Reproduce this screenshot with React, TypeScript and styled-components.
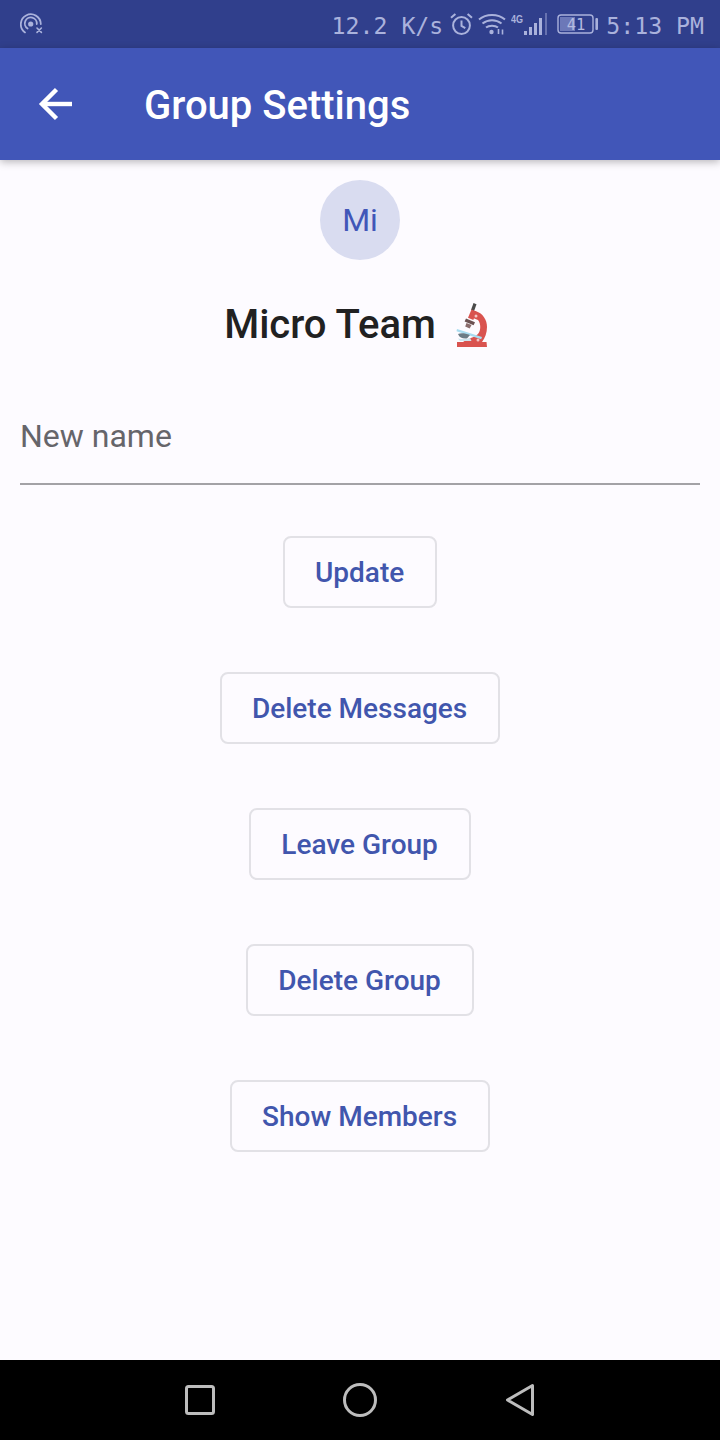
import React from 'react'
import styled, { createGlobalStyle } from 'styled-components'

const GlobalStyle = createGlobalStyle`
    html, body {
        margin: 0;
        padding: 0;
        background: #fdfbff;
    }
    * {
        box-sizing: border-box;
    }
`

const Screen = styled.div`
    width: 720px;
    height: 1440px;
    display: flex;
    flex-direction: column;
    overflow: hidden;
    background: #fdfbff;
    font-family: Roboto, 'Noto Sans', sans-serif;
`

const StatusBar = styled.div`
    height: 48px;
    flex: none;
    display: flex;
    align-items: center;
    justify-content: space-between;
    padding: 0 16px 0 20px;
    background: #303f8c;
    color: #aab2dc;
`

const StatusRight = styled.div`
    display: flex;
    align-items: center;
`

const StatusText = styled.span`
    font-family: 'DejaVu Sans Mono', monospace;
    font-size: 23.2px;
    line-height: 44px;
    padding-top: 4px;
    white-space: pre;
`

const StatusIcon = styled.span<{ $left: number }>`
    display: flex;
    margin-left: ${(p) => p.$left}px;
`

const AppBar = styled.header`
    height: 112px;
    flex: none;
    display: flex;
    align-items: center;
    padding-left: 36px;
    background: #4156b8;
    box-shadow: 0 2px 8px rgba(0, 0, 0, 0.28);
    position: relative;
    z-index: 1;
`

const BarTitle = styled.h1`
    margin: 2px 0 0 68px;
    font-size: 40px;
    font-weight: 500;
    color: #ffffff;
`

const Main = styled.main`
    flex: 1;
    display: flex;
    flex-direction: column;
    align-items: center;
    padding: 20px 20px 0;
`

const Avatar = styled.div`
    width: 80px;
    height: 80px;
    border-radius: 50%;
    display: flex;
    align-items: center;
    justify-content: center;
    background: #d9dcf0;
    color: #4156b8;
    font-size: 32px;
`

const GroupName = styled.div`
    display: flex;
    align-items: center;
    height: 48px;
    margin-top: 40px;
    font-size: 40px;
    font-weight: 500;
    color: #212121;
    white-space: pre;
`

const NameField = styled.label`
    align-self: stretch;
    height: 76px;
    margin-top: 61px;
    display: flex;
    align-items: center;
    padding-bottom: 20px;
    border-bottom: 2px solid #a3a2a6;
    font-size: 32px;
    color: #66656a;
`

const Actions = styled.div`
    display: flex;
    flex-direction: column;
    align-items: center;
    gap: 64px;
    margin-top: 51px;
`

const ActionButton = styled.button`
    height: 72px;
    padding: 0 30.8px 0 30px;
    border: 2px solid #e2e1e6;
    border-radius: 8px;
    background: transparent;
    color: #4156ad;
    font-family: inherit;
    font-size: 28px;
    font-weight: 500;
`

const NavBar = styled.nav`
    height: 80px;
    flex: none;
    display: grid;
    grid-template-columns: repeat(3, 160px);
    justify-content: center;
    justify-items: center;
    align-items: center;
    background: #000000;
`

const BackIcon = () => (
    <svg width="40" height="40" viewBox="0 0 40 40" fill="none" stroke="#fff" strokeWidth="4.4">
        <path d="M36 20H6" />
        <path d="M20.5 5.5L6 20l14.5 14.5" />
    </svg>
)

const BroadcastIcon = () => (
    <svg width="24" height="22" viewBox="0 0 24 22" fill="none" stroke="#aab2dc" strokeWidth="1.8" strokeLinecap="round">
        <path d="M5 19.400A10 10 0 1 1 20.800 11" />
        <path d="M7.600 15.600A6 6 0 1 1 16.800 11" />
        <circle cx="10.700" cy="11" r="2.600" fill="#aab2dc" stroke="none" />
        <path d="M17 15l4.400 4.400M21.400 15L17 19.400" strokeWidth="1.600" />
    </svg>
)

const AlarmIcon = () => (
    <svg width="23" height="22" viewBox="0 0 23 22" fill="none" stroke="#aab2dc" strokeWidth="2">
        <circle cx="11.500" cy="12.500" r="8.400" />
        <path d="M11.500 7.500v5.400l3.800 2.200" />
        <path d="M1 4.800L5.400 1M22 4.800L17.600 1" />
    </svg>
)

const WifiIcon = () => (
    <svg width="28" height="22" viewBox="0 0 28 22" fill="none" stroke="#aab2dc" strokeWidth="2">
        <path d="M1 6.500C8 .5 20 .5 27 6.500" />
        <path d="M4.500 10.500C10 6 18 6 23.500 10.500" />
        <path d="M8 14.500C11 12 17 12 20 14.500" />
        <circle cx="13.500" cy="19" r="2.200" fill="#aab2dc" stroke="none" />
        <path d="M20.500 16v5M24.500 16.500v5" strokeWidth="1.600" />
    </svg>
)

const SignalIcon = () => (
    <svg width="36" height="22" viewBox="0 0 36 22" fill="#aab2dc">
        <text x="0" y="10" fontFamily="'Liberation Sans', sans-serif" fontSize="11.500" fontWeight="700" textLength="12" lengthAdjust="spacingAndGlyphs">4G</text>
        <rect x="13" y="18" width="3" height="4" />
        <rect x="18" y="14" width="3" height="8" />
        <rect x="23" y="10" width="3" height="12" />
        <rect x="28" y="5" width="3" height="17" />
        <rect x="34" y="0" width="2" height="22" opacity="0.45" />
    </svg>
)

const BatteryIcon = () => (
    <svg width="41" height="20" viewBox="0 0 41 20" fill="none">
        <rect x="1" y="1" width="35" height="18" rx="3" stroke="#aab2dc" strokeWidth="1.400" />
        <rect x="3" y="3" width="15" height="14" fill="#6c78b8" />
        <text x="19" y="15.500" textAnchor="middle" fill="#b4bbe0" fontFamily="'DejaVu Sans Mono', monospace" fontSize="15.500">41</text>
        <rect x="38.400" y="4" width="2.600" height="12" rx="1" fill="#aab2dc" />
    </svg>
)

const MicroscopeIcon = () => (
    <svg width="40" height="48" viewBox="0 0 40 48">
        <path d="M1 42h29.500l.5 5H1z" fill="#d9534f" />
        <path d="M19 11C27 13 31 20 31 27 31 33 29 38 26 42H7C12 38 18 38 22 34 25 30 25 24 22 20L17 18z" fill="#d9534f" />
        <path d="M17.500 3l3 1.200-2.500 7-3-1.200z" fill="#4a4a4a" />
        <path d="M15.500 9.500l5 2-3.200 8.500-5.300-2.200z" fill="#d9534f" />
        <path d="M10 18.500l9 3.700-1.400 3-9-3.700z" fill="#6b5252" />
        <path d="M10.500 23l5 2.100-1.800 3.400-4.500-2z" fill="#8a6c6c" />
        <path d="M1 29l25 8-.8 2.200L.5 31.200z" fill="#a9dcf0" />
        <path d="M2 34c3-1.500 7-1 12 1l-3 3.500C7 39 3.500 38 2 34z" fill="#6b7c86" />
        <path d="M2 38.500c4 .8 9 1 12-.8l1.500 3.300H4z" fill="#cfe6ef" />
        <circle cx="20" cy="16" r="1.500" fill="#f3c6c6" />
        <circle cx="22" cy="40" r="1.500" fill="#f3c6c6" />
    </svg>
)

const SquareIcon = () => (
    <svg width="30" height="30" viewBox="0 0 30 30" fill="none" stroke="#bdbdbd" strokeWidth="3">
        <rect x="1.500" y="1.500" width="27" height="27" rx="2" />
    </svg>
)

const CircleIcon = () => (
    <svg width="34" height="34" viewBox="0 0 34 34" fill="none" stroke="#bdbdbd" strokeWidth="3">
        <circle cx="17" cy="17" r="15.500" />
    </svg>
)

const TriangleIcon = () => (
    <svg width="28" height="32" viewBox="0 0 28 32" fill="none" stroke="#bdbdbd" strokeWidth="3" strokeLinejoin="round">
        <path d="M26.500 1.500L1.500 16l25 14.500z" />
    </svg>
)

const actions = ['Update', 'Delete Messages', 'Leave Group', 'Delete Group', 'Show Members']

export default function App() {
    return (
        <Screen>
            <GlobalStyle />
            <StatusBar>
                <BroadcastIcon />
                <StatusRight>
                    <StatusText>12.2 K/s</StatusText>
                    <StatusIcon $left={7}>
                        <AlarmIcon />
                    </StatusIcon>
                    <StatusIcon $left={5}>
                        <WifiIcon />
                    </StatusIcon>
                    <StatusIcon $left={5}>
                        <SignalIcon />
                    </StatusIcon>
                    <StatusIcon $left={10}>
                        <BatteryIcon />
                    </StatusIcon>
                    <StatusIcon $left={8}>
                        <StatusText>5:13 PM</StatusText>
                    </StatusIcon>
                </StatusRight>
            </StatusBar>
            <AppBar>
                <BackIcon />
                <BarTitle>Group Settings</BarTitle>
            </AppBar>
            <Main>
                <Avatar>Mi</Avatar>
                <GroupName>
                    Micro Team{'  '}
                    <MicroscopeIcon />
                </GroupName>
                <NameField>New name</NameField>
                <Actions>
                    {actions.map((label) => (
                        <ActionButton key={label}>{label}</ActionButton>
                    ))}
                </Actions>
            </Main>
            <NavBar>
                <SquareIcon />
                <CircleIcon />
                <TriangleIcon />
            </NavBar>
        </Screen>
    )
}
